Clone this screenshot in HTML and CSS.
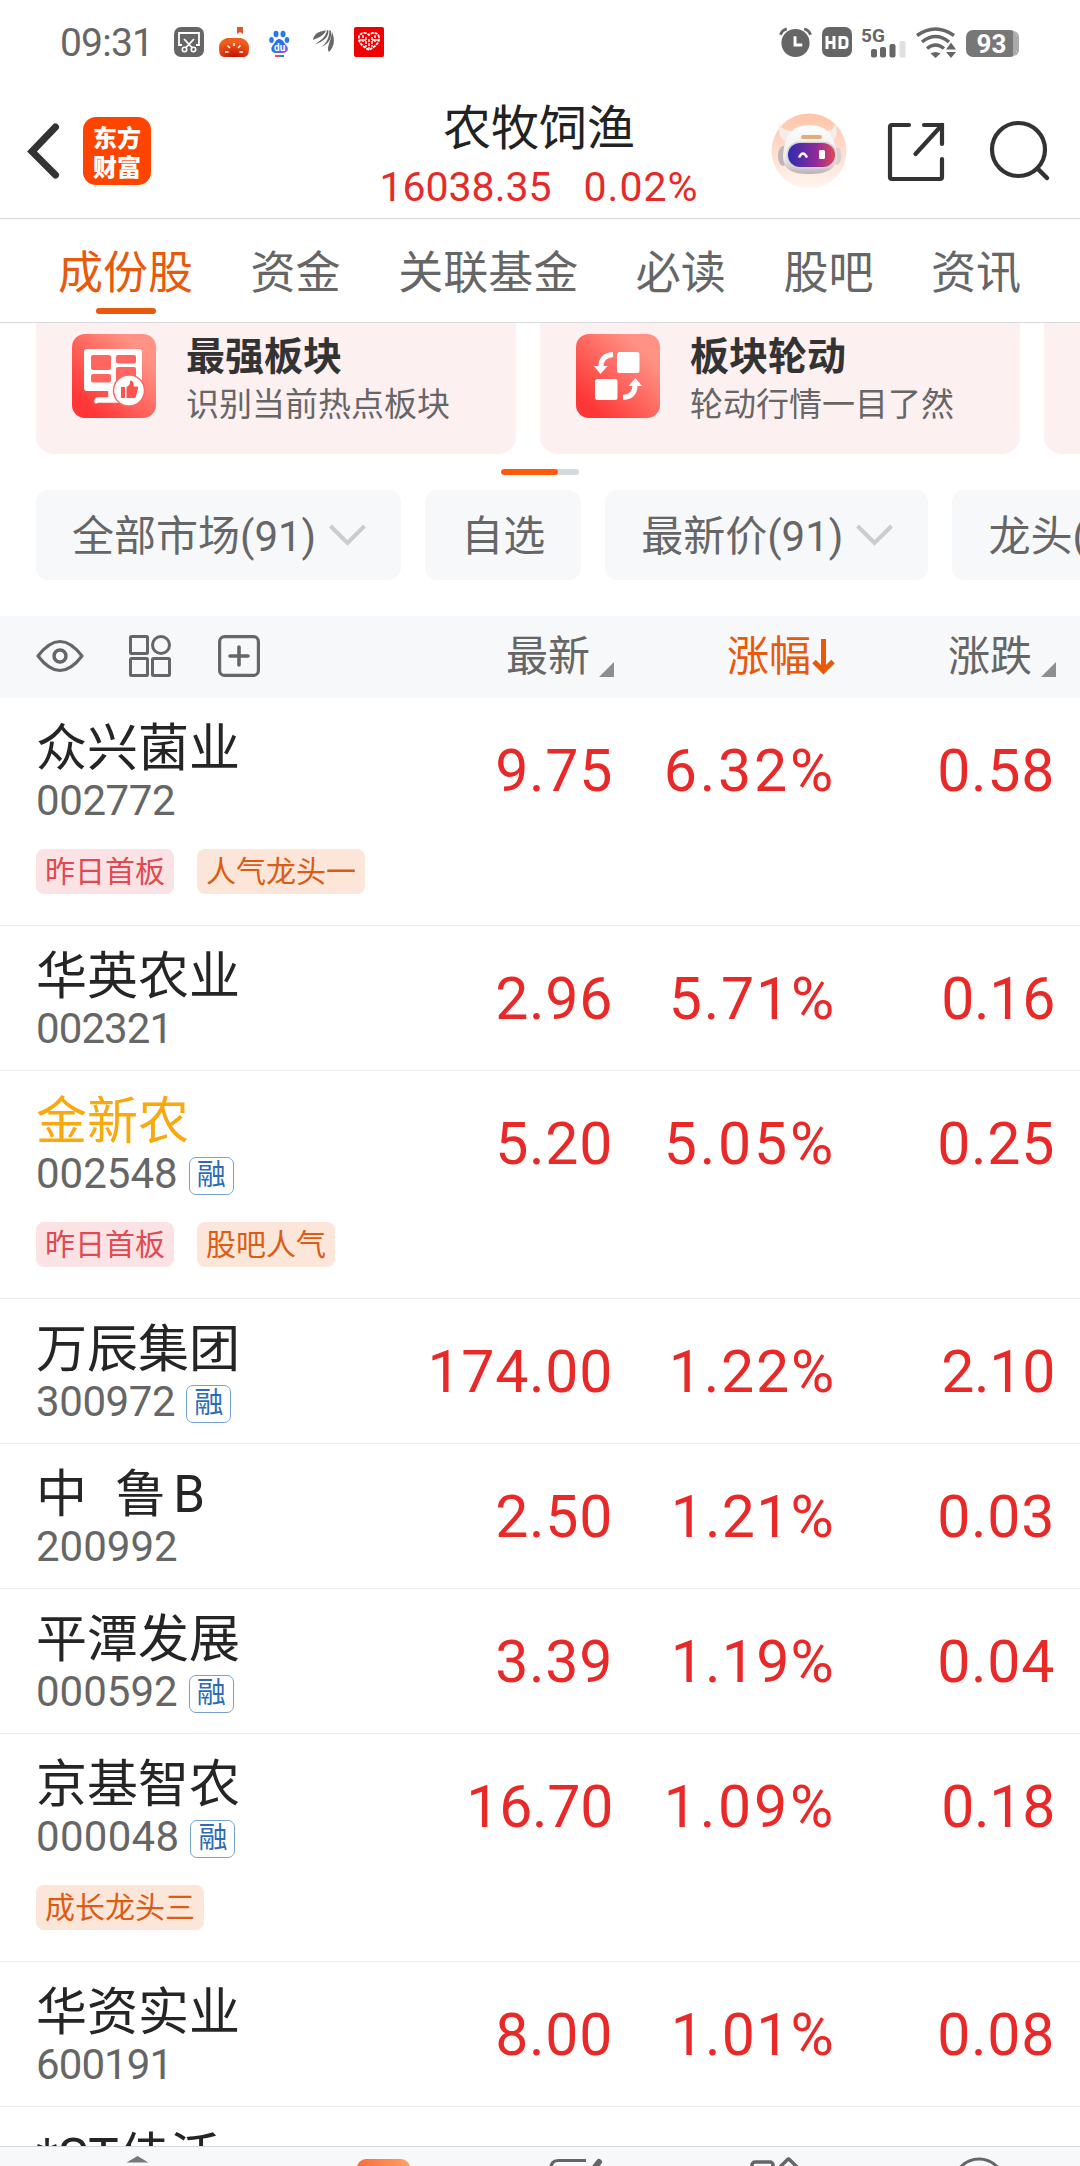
FILE: index.html
```html
<!DOCTYPE html>
<html lang="zh-CN">
<head>
<meta charset="utf-8">
<title>农牧饲渔</title>
<link rel="stylesheet" href="styles.css">
</head>
<body>
<div class="app">
  <div class="status">
    <span class="clock">09:31</span>
    <div class="status-left">
      <svg width="30" height="30" viewBox="0 0 30 30"><rect width="30" height="30" rx="7" fill="#666"/><path d="M8 18H5V6h20v12h-3" fill="none" stroke="#fff" stroke-width="1.8"/><path d="M10 12l8.500 9M20 12l-8.500 9" stroke="#fff" stroke-width="1.800"/><circle cx="10.500" cy="22.500" r="2.200" fill="none" stroke="#fff" stroke-width="1.600"/><circle cx="19.500" cy="22.500" r="2.200" fill="none" stroke="#fff" stroke-width="1.600"/></svg>
      <svg width="30" height="30" viewBox="0 0 30 30"><defs><radialGradient id="pk" cx=".5" cy="1" r=".8"><stop offset="0" stop-color="#c40d00"/><stop offset="1" stop-color="#f0601c"/></radialGradient></defs><path d="M18 0h6v7l-3-2-3 2z" fill="#e0562c"/><path d="M8 11h14c6 2 8 5 8 10 0 7-2 9-6 9H6c-4 0-6-2-6-9 0-5 2-8 8-10z" fill="url(#pk)"/><path d="M15 16v3M8.500 18.500l2.500 2.500M21.500 18.500l-2.500 2.500M6 25h3.500M20.500 25H24" stroke="#fff" stroke-width="1.600"/></svg>
      <svg width="30" height="30" viewBox="0 0 30 30"><defs><linearGradient id="bd" x2="1" y2="1"><stop offset=".5" stop-color="#2d6ff0"/><stop offset="1" stop-color="#b04df5"/></linearGradient></defs><g fill="#2878f5"><ellipse cx="12" cy="7" rx="2.500" ry="3.300"/><ellipse cx="19" cy="7" rx="2.500" ry="3.300"/><ellipse cx="7.500" cy="13" rx="2.300" ry="3"/><ellipse cx="23" cy="13" rx="2.300" ry="3"/></g><path d="M15 12c4 0 5 4 7 6 4 4 1 8-3 8h-7c-5 0-6-5-3-8 2-2 3-6 6-6z" fill="url(#bd)"/><text x="10" y="23.500" class="du">du</text><path d="M11 29h5" stroke="#e34d59" stroke-width="2"/><path d="M16 29h4" stroke="#3c7be0" stroke-width="2"/></svg>
      <svg width="30" height="30" viewBox="0 0 30 30"><g fill="#686868"><path d="M4 13C5 6 11 4 17 3.500c-2 5-7 7-13 9.500z"/><path d="M6 17.500C12 13 17 10 18 3l1.500.5c0 7-5 11-13.500 14z"/><path d="M12 20c6-4 8-9 8.500-17l1.500 1c1 7-2 13-10 16z"/><path d="M20 25c-3-4 1.500-9 3-20 3.500 8 2 15-3 20z"/></g></svg>
      <svg width="30" height="30" viewBox="0 0 30 30"><rect width="30" height="30" rx="2" fill="#f00000"/><path d="M15 23C8 19 4 15 5 10c1-5 7-5 10-2 3-3 9-3 10 2 1 5-3 9-10 13z" fill="none" stroke="#fff" stroke-width="1.800" stroke-dasharray="3 1"/><path d="M9 8v8M12 10v10M15 12v10M18 10v10M21 8v8M6 13h6M18 13h6" stroke="#fff" stroke-width="1.500" stroke-dasharray="3 1"/></svg>
    </div>
    <div class="status-right">
      <svg width="33" height="31" viewBox="0 0 34 31"><circle cx="17" cy="16" r="14.500" fill="#666"/><path d="M1.500 7.500Q3 3 8 1.500M26 1.500q5 1.500 6.500 6" fill="none" stroke="#666" stroke-width="3"/><path d="M16.500 9v9H24" fill="none" stroke="#fff" stroke-width="3"/></svg>
      <svg width="30" height="31" viewBox="0 0 30 31"><rect width="30" height="30" rx="7" fill="#666"/><path d="M5 9v13M12 9v13M5 15.500h7M18 10.500h4q3 0 3 3v4q0 3-3 3h-4z" fill="none" stroke="#fff" stroke-width="3"/></svg>
      <svg width="46" height="31" viewBox="0 0 46 31"><text x="0" y="14.500" class="net">5G</text><g fill="#666"><rect x="10" y="22" width="6" height="8.500" rx="2"/><rect x="19" y="20" width="6" height="10.500" rx="2"/><rect x="28.500" y="17" width="6" height="13.500" rx="2"/></g><rect x="38.500" y="14" width="6" height="16.500" rx="1.500" fill="#e0e0e0"/></svg>
      <svg width="40" height="31" viewBox="0 0 40 31"><g fill="none" stroke="#666" stroke-width="3.500"><path d="M1 8.500Q19.500-4.500 38 8.500"/><path d="M6 15Q19.500 4 33 15"/><path d="M11 21.500q8.500-7 17 0"/></g><path d="M14.500 26.500q5-3 10 0l-5 4.500z" fill="#666"/><path d="M30 22.500l5-7 5 7zM30 25h10l-5 6z" fill="#666"/></svg>
      <span class="battery">93</span>
    </div>
  </div>

  <header class="topbar">
    <svg class="back" width="34" height="58" viewBox="0 0 34 58"><path d="M29.500 5L6 29.500 29.500 53" fill="none" stroke="#333" stroke-width="7" stroke-linecap="round"/></svg>
    <div class="brand"><span>东方</span><span>财富</span></div>
    <div class="heading">
      <h1>农牧饲渔</h1>
      <p><span>16038.35</span><span class="pct">0.02%</span></p>
    </div>
    <svg class="robot" width="76" height="76" viewBox="0 0 76 76">
      <defs>
        <linearGradient id="rb" x2="0" y2="1"><stop offset="0" stop-color="#ffc4a8"/><stop offset="1" stop-color="#fff6f1"/></linearGradient>
        <linearGradient id="rf" x2="1"><stop offset="0" stop-color="#2f2bb0"/><stop offset=".6" stop-color="#8f2a9a"/><stop offset="1" stop-color="#e0485a"/></linearGradient>
        <linearGradient id="rh" x2="0" y2="1"><stop offset="0" stop-color="#fff"/><stop offset=".7" stop-color="#ece8e8"/><stop offset="1" stop-color="#b9b2b4"/></linearGradient>
      </defs>
      <circle cx="38" cy="38" r="37.500" fill="url(#rb)"/>
      <path d="M19 29Q6 29 8 10q3 9 16 8zM56 18q7 0 8-8 6 16-7 20z" fill="#f5edea"/>
      <ellipse cx="12" cy="43" rx="5" ry="10" fill="#bfb6b8"/><ellipse cx="66" cy="43" rx="4.500" ry="9" fill="#d9d0d1"/>
      <path d="M38 12C56 12 65 24 66 43c0 14-12 18-28 18S12 57 12 43C13 24 21 12 38 12z" fill="url(#rh)"/>
      <rect x="30" y="22" width="21" height="4" rx="2" fill="#e9ab76"/>
      <rect x="15.500" y="28.500" width="50" height="27" rx="13" fill="#d8d2d6"/>
      <rect x="17" y="30" width="47" height="24" rx="12" fill="url(#rf)"/>
      <path d="M28 44.500q4-8 8 0" fill="none" stroke="#fff" stroke-width="2.500"/><rect x="48" y="37" width="6" height="9" rx="1.500" fill="#fff"/>
    </svg>
    <svg class="share" width="60" height="60" viewBox="0 0 60 60"><path d="M22 3H5Q3 3 3 5v50q0 2 2 2h48q2 0 2-2V37M37 3h18v19M55 3L28.500 32" fill="none" stroke="#333" stroke-width="4.200" stroke-linecap="round"/></svg>
    <svg class="search" width="62" height="62" viewBox="0 0 62 62"><circle cx="29.500" cy="29.500" r="26.500" fill="none" stroke="#333" stroke-width="4.200"/><path d="M48.500 48.500L58 58" stroke="#333" stroke-width="4.500" stroke-linecap="round"/></svg>
  </header>

  <nav class="tabs">
    <span class="tab active">成份股</span><span class="tab">资金</span><span class="tab">关联基金</span><span class="tab">必读</span><span class="tab">股吧</span><span class="tab">资讯</span>
  </nav>

  <div class="cards">
    <section class="card">
      <svg width="84" height="84" viewBox="0 0 84 84">
        <defs><linearGradient id="cg" x1="0" y1="1" x2="1" y2="0"><stop offset=".15" stop-color="#ff3636"/><stop offset=".8" stop-color="#ff9284"/></linearGradient></defs>
        <rect width="84" height="84" rx="13" fill="url(#cg)"/>
        <path d="M15 15h52q3 0 3 3v39H15q-3 0-3-3V18q0-3 3-3z" fill="#fff"/>
        <path d="M37 55v9H26q-3 0-3 3t3 1h24V55z" fill="#fff" stroke="#fff" stroke-width="1.500"/>
        <g fill="#ff6661"><rect x="19" y="21" width="20" height="15" rx="2"/><rect x="44" y="21" width="20" height="8.500" rx="2"/><rect x="19" y="40" width="20" height="8.500" rx="2"/><rect x="44" y="33" width="20" height="15" rx="2"/></g>
        <circle cx="57" cy="56.500" r="15.500" fill="#fff" stroke="#ff6661" stroke-width="1.500"/>
        <path d="M49 53h4v11h-4zM54.500 53q4-2 3.500-6 4-1 3.500 5.500h4q1 0 .5 2l-2 8q-.5 1.500-2 1.500h-7.500z" fill="#ff5350"/>
      </svg>
      <div><h2>最强板块</h2><p>识别当前热点板块</p></div>
    </section>
    <section class="card">
      <svg width="84" height="84" viewBox="0 0 84 84">
        <rect width="84" height="84" rx="13" fill="url(#cg)"/>
        <g fill="#fff"><rect x="41" y="18" width="22.500" height="21" rx="2.500"/><rect x="19" y="45" width="22.500" height="21" rx="2.500"/><path d="M18 32h13.500l-7 8zM52.500 52H66l-6.500-8z"/></g>
        <path d="M37 20.500q-12 1-12 12M47 63.500q12-1 12-12" fill="none" stroke="#fff" stroke-width="5"/>
      </svg>
      <div><h2>板块轮动</h2><p>轮动行情一目了然</p></div>
    </section>
    <section class="card"></section>
  </div>
  <div class="pager"><i></i></div>

  <div class="filters">
    <span class="pill">全部市场(91)<svg width="37" height="22" viewBox="0 0 37 22"><path d="M1.500 2l17 17 17-17" fill="none" stroke="#ccc" stroke-width="4"/></svg></span>
    <span class="pill">自选</span>
    <span class="pill">最新价(91)<svg width="37" height="22" viewBox="0 0 37 22"><path d="M1.500 2l17 17 17-17" fill="none" stroke="#ccc" stroke-width="4"/></svg></span>
    <span class="pill">龙头(91)</span>
  </div>

  <div class="grid thead">
    <div class="tools">
      <svg width="48" height="42" viewBox="0 0 48 42"><path d="M2 21Q24-8 46 21 24 50 2 21z" fill="none" stroke="#666" stroke-width="3.200" stroke-linejoin="round"/><circle cx="24" cy="21" r="6" fill="none" stroke="#666" stroke-width="3.500"/></svg>
      <svg width="42" height="42" viewBox="0 0 42 42"><g fill="none" stroke="#666" stroke-width="3"><rect x="1.500" y="1.500" width="17" height="17" rx="1"/><circle cx="32" cy="10" r="8.500"/><rect x="1.500" y="23.500" width="17" height="17" rx="1"/><rect x="23.500" y="23.500" width="17" height="17" rx="1"/></g></svg>
      <svg width="42" height="42" viewBox="0 0 42 42"><rect x="1.600" y="1.600" width="38.800" height="38.800" rx="5" fill="none" stroke="#666" stroke-width="3.200"/><path d="M21 12v18M12 21h18" stroke="#666" stroke-width="3.600" stroke-linecap="round"/></svg>
    </div>
    <div class="col">最新<i class="corner"></i></div>
    <div class="col sorted">涨幅<svg width="23" height="36" viewBox="0 0 23 36"><path d="M11.500 0v32M2 22.500l9.500 9.500 9.500-9.500" fill="none" stroke="#e8590c" stroke-width="5"/></svg></div>
    <div class="col">涨跌<i class="corner"></i></div>
  </div>

  <main class="list">
    <div class="grid row"><div class="stock"><b>众兴菌业</b><div class="code tight">002772</div></div><span class="num">9.75</span><span class="num per">6.32%</span><span class="num">0.58</span><div class="tags"><span class="tag red">昨日首板</span><span class="tag">人气龙头一</span></div></div>
    <div class="grid row"><div class="stock"><b>华英农业</b><div class="code tighter">002321</div></div><span class="num">2.96</span><span class="num per one">5.71%</span><span class="num one">0.16</span></div>
    <div class="grid row"><div class="stock"><b class="own">金新农</b><div class="code">002548<em>融</em></div></div><span class="num">5.20</span><span class="num per">5.05%</span><span class="num">0.25</span><div class="tags"><span class="tag red">昨日首板</span><span class="tag">股吧人气</span></div></div>
    <div class="grid row"><div class="stock"><b>万辰集团</b><div class="code tight">300972<em>融</em></div></div><span class="num">174.00</span><span class="num per one">1.22%</span><span class="num one">2.10</span></div>
    <div class="grid row"><div class="stock"><b>中  鲁<span class="board">B</span></b><div class="code">200992</div></div><span class="num">2.50</span><span class="num per ones">1.21%</span><span class="num">0.03</span></div>
    <div class="grid row"><div class="stock"><b>平潭发展</b><div class="code">000592<em>融</em></div></div><span class="num">3.39</span><span class="num per ones">1.19%</span><span class="num">0.04</span></div>
    <div class="grid row"><div class="stock"><b>京基智农</b><div class="code loose">000048<em>融</em></div></div><span class="num one">16.70</span><span class="num per">1.09%</span><span class="num one">0.18</span><div class="tags"><span class="tag">成长龙头三</span></div></div>
    <div class="grid row"><div class="stock"><b>华资实业</b><div class="code tighter">600191</div></div><span class="num">8.00</span><span class="num per ones">1.01%</span><span class="num">0.08</span></div>
    <div class="grid row"><div class="stock"><b>*ST佳沃</b></div></div>
  </main>

  <footer class="dock">
    <svg width="60" height="60" viewBox="0 0 60 60"><path d="M18.500 9.500L29.500 3l11 6.500z" fill="#77787c"/></svg>
    <svg class="d2" width="60" height="60" viewBox="0 0 60 60"><defs><linearGradient id="dk" x2="1"><stop offset="0" stop-color="#ff6a3c"/><stop offset="1" stop-color="#ffa25c"/></linearGradient></defs><rect x="3" y="6" width="53" height="54" rx="9" fill="url(#dk)"/></svg>
    <svg class="d3" width="60" height="60" viewBox="0 0 60 60"><path d="M42 7.500H14q-7 0-7 8V50" fill="none" stroke="#666" stroke-width="3.200"/><path d="M51 14l4-5" stroke="#666" stroke-width="6" stroke-linecap="round"/></svg>
    <svg class="d4" width="60" height="60" viewBox="0 0 60 60"><g fill="none" stroke="#666" stroke-width="3.500"><rect x="6" y="9" width="21" height="21" rx="3"/><rect x="34" y="9" width="17" height="17" rx="2" transform="rotate(45 42.500 17.500)"/></g></svg>
    <svg class="d5" width="60" height="60" viewBox="0 0 60 60"><circle cx="31" cy="31" r="25" fill="none" stroke="#666" stroke-width="3"/></svg>
  </footer>
</div>
</body>
</html>
```
FILE: styles.css
```css
* { box-sizing: border-box; margin: 0; padding: 0; }
body { background: #fff; font-family: Roboto, "Noto Sans CJK SC", sans-serif; color: #666; }
svg { display: block; flex: none; overflow: visible; }
i, em { font-style: normal; }

.app { width: 1080px; height: 2166px; overflow: hidden; display: flex; flex-direction: column; background: #fff; }
.app > * { flex: none; }

/* system status bar */
.status { height: 86px; display: flex; align-items: center; padding: 0 60px 2px 60px; white-space: nowrap; }
.clock { width: 114px; font-size: 39px; letter-spacing: -0.8px; line-height: 46px; padding-top: 1px; }
.status-left { display: flex; gap: 15px; }
.status-right { display: flex; gap: 9px; margin-left: auto; align-items: center; }
.status-right svg:first-child { margin-right: 1px; }
.du { font: bold 10px Roboto, sans-serif; fill: #fff; }
.net { font: bold 19px Roboto, sans-serif; fill: #666; }
.battery { width: 51px; height: 27px; margin: 3px 3px 0 1px; border-radius: 7px; background: linear-gradient(90deg, #777 93%, #aaa 93%); color: #fff; font-weight: 700; font-size: 26px; line-height: 28px; text-align: center; box-shadow: 3px 0 0 -1px #aaa; }

/* title bar */
.topbar { height: 133px; border-bottom: 1px solid #d6d8db; display: flex; align-items: flex-start; padding: 0 29px 0 26px; }
.back { margin-top: 36px; }
.brand { width: 68px; height: 68px; margin: 31px 0 0 23px; border-radius: 13px; background: #ff4400; color: #fff; font: 900 24px/29px "Noto Sans CJK SC", sans-serif; display: flex; flex-direction: column; align-items: center; justify-content: center; }
.heading { width: 340px; margin-left: 218px; padding-top: 13px; text-align: center; color: #222; }
.heading h1 { font-size: 48px; font-weight: 400; line-height: 60px; }
.heading p { display: flex; justify-content: center; gap: 32px; font-size: 41px; line-height: 56px; color: #e52a2a; }
.pct { letter-spacing: 1px; }
.robot { margin: 27px 0 0 62px; }
.share { margin: 36px 0 0 40px; }
.search { margin: 34px 0 0 auto; }

/* tabs */
.tabs { height: 104px; display: flex; gap: 57.600px; padding: 22px 0 0 58px; border-bottom: 1px solid #d6d8db; font-size: 45px; line-height: 66px; white-space: nowrap; }
.tab { display: flex; flex-direction: column; align-items: center; }
.active { color: #e8590c; }
.active::after { content: ""; width: 60px; height: 6px; margin-top: 1px; border-radius: 3px; background: #e8590c; }

/* feature cards */
.cards { height: 131px; display: flex; gap: 24px; padding-left: 36px; overflow: hidden; }
.card { flex: none; width: 480px; height: 131px; padding: 11px 36px 0; display: flex; gap: 30px; background: #fdf0f1; border-radius: 0 0 18px 18px; white-space: nowrap; }
.card h2 { font-size: 39px; font-weight: 600; color: #333; line-height: 46px; }
.card p { font-size: 33px; line-height: 46px; margin-top: 2px; }
.pager { align-self: center; width: 78px; height: 6px; margin-top: 15px; border-radius: 3px; background: #d5d8dc; overflow: hidden; }
.pager i { display: block; width: 57px; height: 6px; border-radius: 3px; background: #ff5a0a; }

/* filters */
.filters { display: flex; gap: 24px; margin: 15px 0 36px; padding-left: 36px; overflow: hidden; }
.pill { flex: none; height: 90px; padding: 4px 36px 0; display: flex; align-items: center; gap: 12px; border-radius: 12px; background: #f7f8fa; font-size: 42px; line-height: 60px; white-space: nowrap; }
.pill svg { margin: 0 -1px 4px 1px; }

/* stock table */
.grid { display: grid; grid-template-columns: 258px 320px 221px 221px; padding-left: 36px; }
.thead { height: 82px; background: #f7f8fa; align-items: center; font-size: 42px; line-height: 60px; }
.tools { display: flex; gap: 46px; align-items: center; padding-bottom: 2px; }
.tools svg:nth-child(2) { margin: 0 1px 0 -1px; }
.col { display: flex; justify-content: flex-end; align-items: center; }
.corner { width: 15px; height: 15px; margin: 25px 0 0 9px; background: #8e8e93; clip-path: polygon(100% 0, 100% 100%, 0 100%); }
.sorted { color: #e8590c; }
.sorted svg { margin-left: 1px; }
.app > .list { flex: 1 1 0; overflow: hidden; }
.row { align-content: start; min-height: 145px; border-bottom: 1px solid #ebebed; white-space: pre; }
.stock { height: 124px; padding-top: 21px; }
.stock b { display: block; font-weight: 400; font-size: 51px; line-height: 60px; color: #252525; word-spacing: 1.500px; }
.stock .own { color: #fba70e; }
.board { margin-left: 7px; }
.code { display: flex; align-items: center; gap: 12px; height: 42px; margin-top: 1px; font-size: 42px; line-height: 42px; }
.tight { letter-spacing: -0.4px; }
.tighter { letter-spacing: -0.9px; }
.loose { letter-spacing: 0.3px; }
.code em { width: 45px; height: 38px; margin-top: 4px; margin-left: -1px; border: 1.500px solid #75a2d6; border-radius: 7px; font-size: 29px; line-height: 35px; letter-spacing: 0; text-align: center; color: #2d6cb5; }
.num { padding: 43px 1px 0 0; font-size: 59px; line-height: 60px; text-align: right; color: #e92828; letter-spacing: 0.7px; }
.one { letter-spacing: -0.3px; }
.per { letter-spacing: 2.800px; margin-right: -2px; }
.per.one { letter-spacing: 1.800px; }
.per.ones { letter-spacing: 1.200px; margin-right: -1px; }
.tags { grid-column: 1 / -1; display: flex; gap: 23px; height: 103px; padding-top: 27px; }
.tag { height: 45px; padding: 0 9px; border-radius: 8px; background: #fce6da; color: #dc5c14; font-size: 30px; line-height: 46px; }
.red { background: #fbe3e5; color: #e04a50; }

/* bottom dock */
.dock { height: 20px; border-top: 1px solid #d3d6da; background: #f7f8fa; display: flex; padding: 6px 0 0 108px; overflow: hidden; }
.d2 { margin-left: 186px; }
.d3 { margin-left: 130px; }
.d4 { margin-left: 142px; }
.d5 { margin-left: 142px; }
```
